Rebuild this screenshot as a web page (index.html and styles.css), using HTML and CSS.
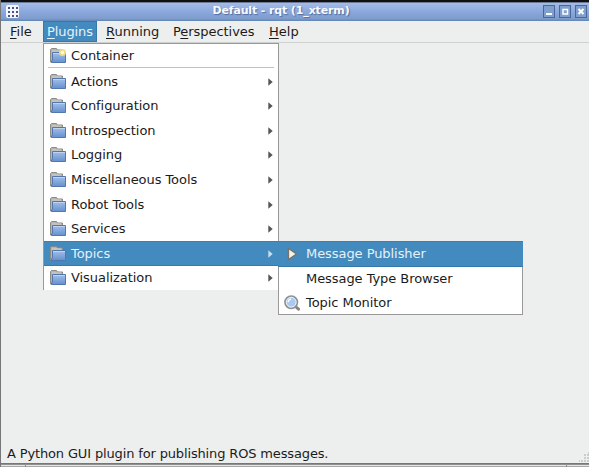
FILE: index.html
```
<!DOCTYPE html>
<html lang="en">
<head>
<meta charset="utf-8">
<title>Default - rqt (1_xterm)</title>
<link rel="stylesheet" href="styles.css">
</head>
<body>
<svg class="defs" aria-hidden="true">
  <defs>
    <linearGradient id="front" x1="0" y1="0" x2="0" y2="1"><stop offset="0" stop-color="#a3c0e8"/><stop offset="1" stop-color="#6490d0"/></linearGradient>
    <symbol id="folder" viewBox="0 0 16 16">
      <path d="M.5 14V1.500L1.500 .500H6.500L7.500 2H12.500V6H3V14Z" fill="#b4b4b0" stroke="#8b8b87"/>
      <path d="M2 3H11" stroke="#d0d0cc"/>
      <path d="M1.500 14.500V13L2.500 12V4.500H15.500V14.500Z" fill="url(#front)" stroke="#5377ad"/>
      <path d="M3 5.500H15" stroke="#bdd3f1"/>
    </symbol>
    <symbol id="arrow" viewBox="0 0 5 8"><path d="M.3 .3 4.7 4 .3 7.7Z" fill="currentColor"/></symbol>
  </defs>
</svg>
<div class="window">
  <header class="titlebar">
    <svg class="appicon" viewBox="0 0 13 13"><rect width="13" height="13" rx="2" fill="#f4f6fc"/><path d="M2 3H4M6 3H8M10 3H12M2 7H4M6 7H8M10 7H12M2 11H4M6 11H8M10 11H12" stroke="#4c5580" stroke-width="2"/></svg>
    <h1>Default - rqt (1_xterm)</h1>
    <div class="controls">
      <button><svg viewBox="0 0 10 11"><path d="M2 8H8" stroke="#fff" stroke-width="2"/></svg></button>
      <button><svg viewBox="0 0 10 11"><path d="M3 3.5H7.5V8H3Z" fill="none" stroke="#fff" stroke-width="1.5"/></svg></button>
      <button><svg viewBox="0 0 10 11"><path d="M2.5 3 7.5 8M7.5 3 2.5 8" stroke="#fff" stroke-width="2"/></svg></button>
    </div>
  </header>
  <nav class="menubar">
    <span class="file"><u>F</u>ile</span>
    <span class="plugins open"><u>P</u>lugins</span>
    <span class="running"><u>R</u>unning</span>
    <span class="perspectives">P<u>e</u>rspectives</span>
    <span class="help"><u>H</u>elp</span>
  </nav>
  <main></main>
  <footer class="status"><span>A Python GUI plugin for publishing ROS messages.</span>
    <svg class="grip" viewBox="0 0 10 10"><path d="M9 1H10M5 3H7M8 3H10M5 6H7M8 6H10M0 9H1M2 9H4M5 9H7M8 9H10" stroke="#cbcccb" stroke-width="2"/></svg>
  </footer>
  <div class="below"><i></i><i></i><i></i></div>
</div>
<div class="menu">
  <div class="item container"><svg class="icon" viewBox="0 0 16 16"><use href="#folder"/><circle cx="12.5" cy="4.500" r="3.5" fill="#eedd82"/><circle cx="12.5" cy="4.500" r="1.7" fill="#fffbe0"/></svg><span>Container</span></div>
  <div class="separator"></div>
  <div class="item"><svg class="icon"><use href="#folder"/></svg><span>Actions</span><svg class="arrow"><use href="#arrow"/></svg></div>
  <div class="item"><svg class="icon"><use href="#folder"/></svg><span>Configuration</span><svg class="arrow"><use href="#arrow"/></svg></div>
  <div class="item"><svg class="icon"><use href="#folder"/></svg><span>Introspection</span><svg class="arrow"><use href="#arrow"/></svg></div>
  <div class="item"><svg class="icon"><use href="#folder"/></svg><span>Logging</span><svg class="arrow"><use href="#arrow"/></svg></div>
  <div class="item"><svg class="icon"><use href="#folder"/></svg><span>Miscellaneous Tools</span><svg class="arrow"><use href="#arrow"/></svg></div>
  <div class="item"><svg class="icon"><use href="#folder"/></svg><span>Robot Tools</span><svg class="arrow"><use href="#arrow"/></svg></div>
  <div class="item"><svg class="icon"><use href="#folder"/></svg><span>Services</span><svg class="arrow"><use href="#arrow"/></svg></div>
  <div class="item selected"><svg class="icon"><use href="#folder"/></svg><span>Topics</span><svg class="arrow"><use href="#arrow"/></svg></div>
  <div class="item"><svg class="icon"><use href="#folder"/></svg><span>Visualization</span><svg class="arrow"><use href="#arrow"/></svg></div>
</div>
<div class="menu submenu">
  <div class="item selected"><svg class="icon" viewBox="0 0 16 16"><path d="M4.500 2.500 12.500 8 4.500 13.500Z" fill="#f4f4ef" stroke="#77736b" stroke-width="1.3"/></svg><span>Message Publisher</span></div>
  <div class="item"><i class="icon"></i><span>Message Type Browser</span></div>
  <div class="item"><svg class="icon" viewBox="0 0 16 16"><path d="M11.500 11.500 14.500 14.200" stroke="#85857f" stroke-width="3" stroke-linecap="round"/><circle cx="7.2" cy="7.2" r="6.2" fill="#a9c9f0" stroke="#8e908f" stroke-width="1.7"/><circle cx="7.2" cy="7.2" r="4.9" fill="none" stroke="#eef5fc" stroke-width=".9"/><path d="M4 7Q4.500 4.500 7 4" fill="none" stroke="#fff" stroke-width="1.300"/></svg><span>Topic Monitor</span></div>
</div>
</body>
</html>
```
FILE: styles.css
```
* { box-sizing: border-box; }
body { margin: 0; width: 589px; height: 467px; overflow: hidden; font: 13px/16px "DejaVu Sans", sans-serif; color: #1b1b1b; background: #edefee; }
.defs { position: absolute; width: 0; height: 0; }
.window { display: flex; flex-direction: column; height: 467px; border-left: 1px solid #777; }
.titlebar { display: flex; align-items: flex-start; height: 21px; padding: 3px 2px 0 5px; border-top: 2px solid #101010; background: linear-gradient(#6c7a96 0 1px, #a3bbe8 1px, #87a5d9 60%, #7d9dcb 17px, #668bba 18px); }
.appicon { width: 13px; height: 13px; }
h1 { flex: 1; margin: -1px 0 0; text-align: center; font-size: 11px; line-height: 14px; font-weight: bold; letter-spacing: -.13px; color: #f7f9ff; text-shadow: 1px 1px 1px #536b9b; }
.controls { display: flex; gap: 4px; }
button { width: 12px; height: 13px; padding: 0; border: 1px solid #4b6796; background: #7f9fcf; }
button svg { display: block; width: 10px; height: 11px; }
.menubar { display: flex; height: 22px; border-bottom: 1px solid #cfd1d0; line-height: 21px; }
.menubar span { height: 21px; white-space: nowrap; }
u { text-underline-offset: 2px; text-decoration-thickness: 1px; text-decoration-skip-ink: none; }
.file { width: 42px; padding-left: 9px; }
.plugins { width: 54px; padding-left: 3px; letter-spacing: -.1px; }
.running { width: 67px; padding-left: 9px; }
.perspectives { width: 95px; padding-left: 9px; letter-spacing: -.05px; }
.help { padding-left: 10px; }
.open { border: 1px solid #3578aa; color: #e7f2fa; background: #438abe; line-height: 19px; }
main { flex: 1; }
.status { display: flex; justify-content: space-between; align-items: flex-end; height: 20px; padding-left: 6px; line-height: 19px; letter-spacing: -.145px; }
.grip { width: 10px; height: 10px; margin-bottom: 1px; }
.below { display: grid; grid-template-columns: 24px 540px 1fr; gap: 1px; height: 4px; padding-top: 1px; border-top: 1px solid #777; background: #909090; }
.below i { background: #e4e6e5; border-bottom: 1px solid #aaa; }
.menu { position: absolute; left: 43px; top: 43px; width: 236px; height: 247px; border: 1px solid #999; border-bottom: 0; background: #fff; letter-spacing: -.06px; }
.item { display: flex; align-items: center; height: 24.54px; padding-left: 6px; white-space: nowrap; }
.item.container { height: 23px; }
.separator { height: 1px; margin: 0 4px 1.6px; background: #c1c1c1; }
.icon { width: 16px; height: 16px; margin-right: 5px; flex: none; }
.arrow { width: 5px; height: 8px; margin-left: auto; margin-right: 5px; color: #555; }
.selected { color: #e5f1f9; background: #438abe; box-shadow: inset 0 1px #3a80b4, inset 0 -1px #3679ab; }
.selected .arrow { color: #c7deee; }
.submenu { left: 278px; top: 241px; width: 245px; height: 74px; border: 1px solid #999; }
.submenu .item { height: 24.5px; padding-left: 5px; }
.submenu .icon { margin-right: 6px; }
.submenu .selected { margin: -1px -1px 0; height: 25.5px; padding-left: 6px; }
```
